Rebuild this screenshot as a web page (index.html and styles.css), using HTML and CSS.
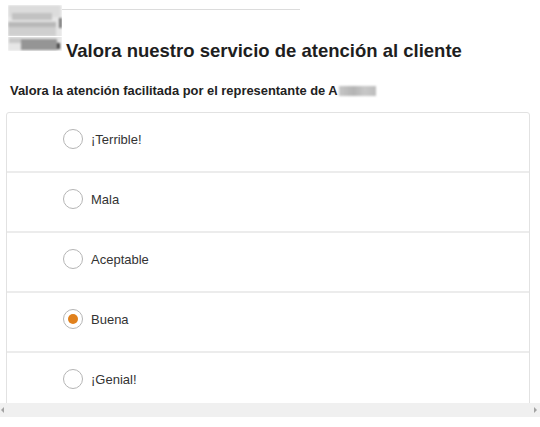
FILE: index.html
```html
<!DOCTYPE html>
<html lang="es">
<head>
<meta charset="utf-8">
<title>Valora nuestro servicio</title>
<link rel="stylesheet" href="styles.css">
</head>
<body>
<div class="viewport">
  <header class="header">
    <div class="logo" aria-label="logo"></div>
    <div class="header-main">
      <div class="rule"></div>
      <h1 class="title">Valora nuestro servicio de atención al cliente</h1>
    </div>
  </header>
  <p class="question">Valora la atención facilitada por el representante de A<span class="redacted"></span></p>
  <div class="card">
    <label class="option"><span class="radio"></span><span class="label">¡Terrible!</span></label>
    <label class="option"><span class="radio"></span><span class="label">Mala</span></label>
    <label class="option"><span class="radio"></span><span class="label">Aceptable</span></label>
    <label class="option"><span class="radio checked"></span><span class="label">Buena</span></label>
    <label class="option"><span class="radio"></span><span class="label">¡Genial!</span></label>
  </div>
</div>
<div class="hscroll">
  <span class="arrow left"></span>
  <span class="arrow right"></span>
</div>
</body>
</html>
```
FILE: styles.css
```css
html, body {
  margin: 0;
  padding: 0;
  background: #fff;
  overflow: hidden;
}
body {
  font-family: "Liberation Sans", Arial, sans-serif;
  color: #222;
  width: 540px;
  height: 427px;
}
.viewport {
  height: 403px;
  overflow: hidden;
}
.header {
  display: flex;
  padding: 5px 0 0 8px;
}
.logo {
  width: 54px;
  height: 46px;
  flex: none;
  filter: blur(1.3px);
  background-image:
    linear-gradient(#959595, #959595),
    linear-gradient(#c8c8c8, #c8c8c8),
    linear-gradient(#444, #444),
    linear-gradient(#b8b8b8, #b8b8b8),
    linear-gradient(#cfcfcf, #cfcfcf),
    linear-gradient(#c2c2c2, #c2c2c2),
    linear-gradient(#dcdcdc, #dcdcdc),
    linear-gradient(#777, #777),
    linear-gradient(#e6e6e6, #e6e6e6);
  background-size:
    36px 11px,
    12px 5px,
    3px 6px,
    48px 5px,
    48px 9px,
    40px 7px,
    52px 12px,
    3px 10px,
    54px 46px;
  background-position:
    13px 34px,
    1px 33px,
    49px 38px,
    0 17px,
    0 22px,
    4px 8px,
    0 0,
    51px 13px,
    0 0;
  background-repeat: no-repeat;
  -webkit-mask-image: linear-gradient(#000 0 31px, transparent 31px 32px, #000 32px);
}
.header-main {
  display: flex;
  flex-direction: column;
}
.rule {
  width: 238px;
  height: 1px;
  margin-top: 4px;
  background: #dcdcdc;
}
.title {
  margin: 30px 0 0 0;
  padding-left: 4px;
  font-size: 18.5px;
  line-height: 21px;
  font-weight: bold;
  color: #1e1e1e;
  white-space: nowrap;
}
.question {
  margin: 22px 0 0 10px;
  font-size: 12.9px;
  line-height: 15px;
  font-weight: bold;
  color: #222;
}
.redacted {
  display: inline-block;
  width: 37px;
  height: 10px;
  margin-left: 1px;
  vertical-align: -1px;
  background: linear-gradient(90deg, #c6c6c6, #b4b4b4 40%, #c8c8c8 70%, #bcbcbc);
  filter: blur(0.8px);
}
.card {
  margin: 14px 0 0 6px;
  width: 522px;
  border: 1px solid #e2e2e2;
  border-radius: 3px;
}
.option {
  display: flex;
  align-items: center;
  gap: 8px;
  height: 20px;
  padding: 16px 0 22px 56px;
  border-bottom: 2px solid #ececec;
}
.radio {
  width: 18px;
  height: 18px;
  border: 1px solid #b5b5b5;
  border-radius: 50%;
  background: #fff;
  display: flex;
  align-items: center;
  justify-content: center;
  flex: none;
}
.radio.checked::after {
  content: "";
  width: 10px;
  height: 10px;
  border-radius: 50%;
  background: #e0801c;
}
.label {
  font-size: 13px;
  color: #333;
}
.hscroll {
  height: 14px;
  background: #f0f0f0;
  display: flex;
  justify-content: space-between;
  align-items: center;
  padding: 0 3px 0 1px;
}
.arrow {
  width: 0;
  height: 0;
  border-top: 3px solid transparent;
  border-bottom: 3px solid transparent;
}
.arrow.left {
  border-right: 3px solid #a3a3a3;
}
.arrow.right {
  border-left: 3px solid #a3a3a3;
}
```
